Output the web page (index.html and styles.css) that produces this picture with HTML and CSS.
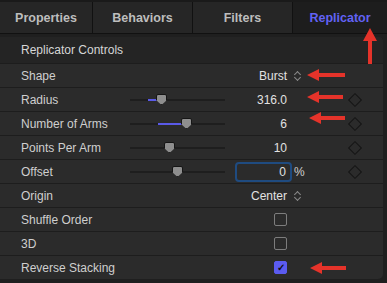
FILE: index.html
```html
<!DOCTYPE html>
<html>
<head>
  <title>Replicator Inspector</title>
  <meta name="viewport" content="width=device-width, initial-scale=1" />
  <link rel="stylesheet" href="styles.css">
</head>
<body>
  <div class="tabs">
    <div class="tab">Properties</div>
    <div class="tab">Behaviors</div>
    <div class="tab">Filters</div>
    <div class="tab active">Replicator</div>
  </div>

  <div class="panel">
    <div class="head">Replicator Controls</div>

    <div class="row">
      <span class="label">Shape</span>
      <span class="slot"></span>
      <span class="value">Burst</span>
      <span class="extra"><span class="updown"></span></span>
    </div>
    <div class="row">
      <span class="label">Radius</span>
      <span class="slot"><span class="slider"><span class="fill" style="left:18px;width:12px"></span><span class="thumb" style="left:31px"></span></span></span>
      <span class="value">316.0</span>
      <span class="extra"></span>
      <span class="key"></span>
    </div>
    <div class="row">
      <span class="label">Number of Arms</span>
      <span class="slot"><span class="slider"><span class="fill" style="left:28px;width:27px"></span><span class="thumb" style="left:56px"></span></span></span>
      <span class="value">6</span>
      <span class="extra"></span>
      <span class="key"></span>
    </div>
    <div class="row">
      <span class="label">Points Per Arm</span>
      <span class="slot"><span class="slider"><span class="thumb" style="left:39px"></span></span></span>
      <span class="value">10</span>
      <span class="extra"></span>
      <span class="key"></span>
    </div>
    <div class="row">
      <span class="label">Offset</span>
      <span class="slot"><span class="slider"><span class="thumb" style="left:47px"></span></span></span>
      <span class="value"><span class="field">0</span></span>
      <span class="extra">%</span>
      <span class="key"></span>
    </div>
    <div class="row">
      <span class="label">Origin</span>
      <span class="slot"></span>
      <span class="value">Center</span>
      <span class="extra"><span class="updown"></span></span>
    </div>
    <div class="row">
      <span class="label">Shuffle Order</span>
      <span class="slot"></span>
      <span class="value"><span class="check"></span></span>
    </div>
    <div class="row">
      <span class="label">3D</span>
      <span class="slot"></span>
      <span class="value"><span class="check"></span></span>
    </div>
    <div class="row">
      <span class="label">Reverse Stacking</span>
      <span class="slot"></span>
      <span class="value"><span class="check on">&#10003;</span></span>
    </div>
  </div>

  <!-- annotation arrows -->
  <svg class="arrow" style="left:307px;top:69px" width="40" height="12"><polygon points="0,6 12,0 12,4 38,4 38,8 12,8 12,12" /></svg>
  <svg class="arrow" style="left:307px;top:91px" width="40" height="12"><polygon points="0,6 12,0 12,4 36,4 36,8 12,8 12,12" /></svg>
  <svg class="arrow" style="left:309px;top:112px" width="40" height="12"><polygon points="0,6 12,0 12,4 36,4 36,8 12,8 12,12" /></svg>
  <svg class="arrow" style="left:310px;top:262px" width="40" height="12"><polygon points="0,6 12,0 12,4 36,4 36,8 12,8 12,12" /></svg>
  <svg class="arrow" style="left:363px;top:28px" width="14" height="36"><polygon points="7,0 14,13 9,13 9,36 5,36 5,13 0,13" /></svg>
</body>
</html>
```

FILE: styles.css
```css
body { margin: 0; background: #1f1f1f; font-family: "Liberation Sans", Arial, sans-serif; color: #d2d2d2; width: 387px; height: 283px; overflow: hidden; }

.tabs { display: flex; height: 31px; background: #262626; border-top: 2px solid #1a1a1a; border-bottom: 1px solid #111; }
.tab { display: flex; align-items: center; justify-content: center; font-size: 12.5px; font-weight: bold; color: #bdbdbd; border-right: 1px solid #111; }
.tab:nth-child(1) { width: 92px; }
.tab:nth-child(2) { width: 99px; }
.tab:nth-child(3) { width: 99px; }
.tab.active { flex: 1; border-right: none; background: #1d1d1d; color: #6262f5; }

.panel { margin: 3px 4px 0 0; background: #2b2b2b; border-radius: 0 5px 5px 0; overflow: hidden; }
.head { height: 26px; display: flex; align-items: center; padding-left: 21px; background: #242424; font-size: 12px; color: #d6d6d6; }

.row { display: grid; grid-template-columns: 130px 95px 64px 56px 20px; align-items: center; height: 23px; border-top: 1px solid #1d1d1d; font-size: 12px; }
.label { padding-left: 21px; color: #cfcfcf; white-space: nowrap; }
.value { text-align: right; padding-right: 2px; color: #e2e2e2; display: flex; justify-content: flex-end; }
.extra { padding-left: 5px; color: #cfcfcf; display: flex; align-items: center; }

.slider { position: relative; display: block; height: 2px; margin-top: 1px; background: #1e1e1e; }
.fill { position: absolute; top: 0; height: 2px; background: #5a5ae8; }
.thumb { position: absolute; top: -5px; width: 11px; height: 11px; margin-left: -5px; background: #8e8e8e; border: 1px solid #151515; box-sizing: border-box; clip-path: polygon(0 0, 100% 0, 100% 55%, 50% 100%, 0 55%); border-radius: 2px 2px 0 0; }

.updown { display: inline-block; width: 7px; height: 11px; position: relative; }
.updown::before, .updown::after { content: ""; position: absolute; left: 1px; width: 4px; height: 4px; border-left: 1px solid #8a8a8a; border-top: 1px solid #8a8a8a; }
.updown::before { top: 2px; transform: rotate(45deg); }
.updown::after { top: 5px; transform: rotate(225deg); }

.key { justify-self: center; width: 8px; height: 8px; border: 1px solid #141414; transform: rotate(45deg); }

.field { display: block; width: 49px; height: 16px; line-height: 16px; border: 2px solid #1f4b80; border-radius: 4px; text-align: right; padding-right: 4px; box-sizing: content-box; margin-right: -5px; }

.check { display: block; width: 11px; height: 11px; border: 1px solid #7d7d7d; border-radius: 2px; font-size: 10px; line-height: 11px; text-align: center; }
.check.on { background: #5b5bf0; border-color: #5b5bf0; color: #111; font-weight: bold; }

.arrow { position: absolute; }
.arrow polygon { fill: #e5332a; }
```
